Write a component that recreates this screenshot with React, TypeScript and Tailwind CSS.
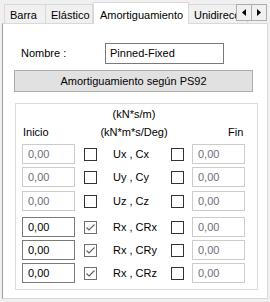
import React from "react";

type Row = {
  label: string;
  start: boolean;
  end: boolean;
  top: string;
};

const rows: Row[] = [
  { label: "Ux , Cx", start: false, end: false, top: "mt-0" },
  { label: "Uy , Cy", start: false, end: false, top: "mt-[3px]" },
  { label: "Uz , Cz", start: false, end: false, top: "mt-[4px]" },
  { label: "Rx , CRx", start: true, end: false, top: "mt-[6px]" },
  { label: "Rx , CRy", start: true, end: false, top: "mt-[3px]" },
  { label: "Rx , CRz", start: true, end: false, top: "mt-[3px]" },
];

function CheckBox({ checked }: { checked: boolean }) {
  return (
    <div
      className={`flex h-[13px] w-[13px] shrink-0 items-center justify-center border bg-white ${
        checked ? "border-[#6f6f6f]" : "border-[#333333]"
      }`}
    >
      {checked && (
        <svg width="11" height="11" viewBox="0 0 11 11">
          <path
            d="M1.5 5.5 L4 8 L9.5 2.5"
            fill="none"
            stroke="#5f5f5f"
            strokeWidth="1.1"
          />
        </svg>
      )}
    </div>
  );
}

function NumberBox({ enabled }: { enabled: boolean }) {
  return (
    <div
      className={`flex h-[20px] w-[53px] shrink-0 items-center border bg-white pl-[5px] ${
        enabled
          ? "border-[#7a7a7a] text-black"
          : "border-[#cccccc] text-[#6d6d7a]"
      }`}
    >
      0,00
    </div>
  );
}

function Tab({
  label,
  width,
  selected,
  extra,
}: {
  label: string;
  width: string;
  selected?: boolean;
  extra?: string;
}) {
  if (selected) {
    return (
      <div
        className={`relative z-10 -mb-px flex h-[22px] shrink-0 items-start overflow-hidden border-x border-t border-[#d9d9d9] bg-white pl-[6px] pt-[4px] ${width} ${extra ?? ""}`}
      >
        {label}
      </div>
    );
  }

  return (
    <div
      className={`flex h-[19px] shrink-0 items-center overflow-hidden whitespace-nowrap border-x border-t border-[#d9d9d9] bg-[#f0f0f0] pl-[5px] pt-[2px] ${width} ${extra ?? ""}`}
    >
      {label}
    </div>
  );
}

export default function App() {
  return (
    <div
      className="relative h-[302px] w-[270px] overflow-hidden bg-[#f0f0f0] text-[11px] text-black"
      style={{ fontFamily: '"Liberation Sans", Arial, sans-serif' }}
    >
      <div className="relative flex h-[23px] items-end pl-[4px]">
        <Tab label="Barra" width="w-[42px]" />
        <Tab label="Elástico" width="w-[48px]" extra="-ml-px" />
        <Tab label="Amortiguamiento" width="w-[96px]" selected />
        <Tab label="Unidirecc" width="w-[60px]" extra="-ml-px" />

        <div className="absolute left-[236px] top-[4px] flex">
          <div className="flex h-[17px] w-[16px] items-center justify-center border border-[#adadad] bg-[#f0f0f0]">
            <svg width="4" height="7" viewBox="0 0 4 7">
              <path d="M4 0 L0 3.5 L4 7 Z" fill="#000" />
            </svg>
          </div>
          <div className="-ml-px flex h-[17px] w-[16px] items-center justify-center border border-[#adadad] bg-[#f0f0f0]">
            <svg width="4" height="7" viewBox="0 0 4 7">
              <path d="M0 0 L4 3.5 L0 7 Z" fill="#000" />
            </svg>
          </div>
        </div>
      </div>

      <div className="ml-[2px] h-[276px] w-[266px] border border-[#d9d9d9] border-l-[#a0a0a0] bg-white">
        <div className="mt-[19px] flex items-center">
          <div className="w-[102px] pl-[18px]">Nombre :</div>
          <div className="flex h-[21px] w-[119px] items-center border border-[#7a7a7a] pl-[4px]">
            Pinned-Fixed
          </div>
        </div>

        <div className="ml-[11px] mt-[6px] flex h-[22px] w-[239px] items-center justify-center border border-[#adadad] bg-[#e1e1e1]">
          Amortiguamiento según PS92
        </div>

        <div className="ml-[12px] mt-[11px] h-[187px] w-[243px] border border-[#dcdcdc]">
          <div className="flex h-[40px] pt-[1px] leading-[18px]">
            <div className="w-[68px] pl-[7px] pt-[18px]">Inicio</div>
            <div className="w-[100px] text-center">
              <div>(kN*s/m)</div>
              <div>(kN*m*s/Deg)</div>
            </div>
            <div className="pl-[44px] pt-[18px]">Fin</div>
          </div>

          {rows.map((row) => (
            <div
              key={row.label}
              className={`flex h-[20px] items-center pl-[6px] ${row.top}`}
            >
              <NumberBox enabled={row.start} />
              <div className="ml-[9px]">
                <CheckBox checked={row.start} />
              </div>
              <div className="ml-[16px] w-[58px] whitespace-nowrap">
                {row.label}
              </div>
              <CheckBox checked={row.end} />
              <div className="ml-[8px]">
                <NumberBox enabled={row.end} />
              </div>
            </div>
          ))}
        </div>
      </div>
    </div>
  );
}
